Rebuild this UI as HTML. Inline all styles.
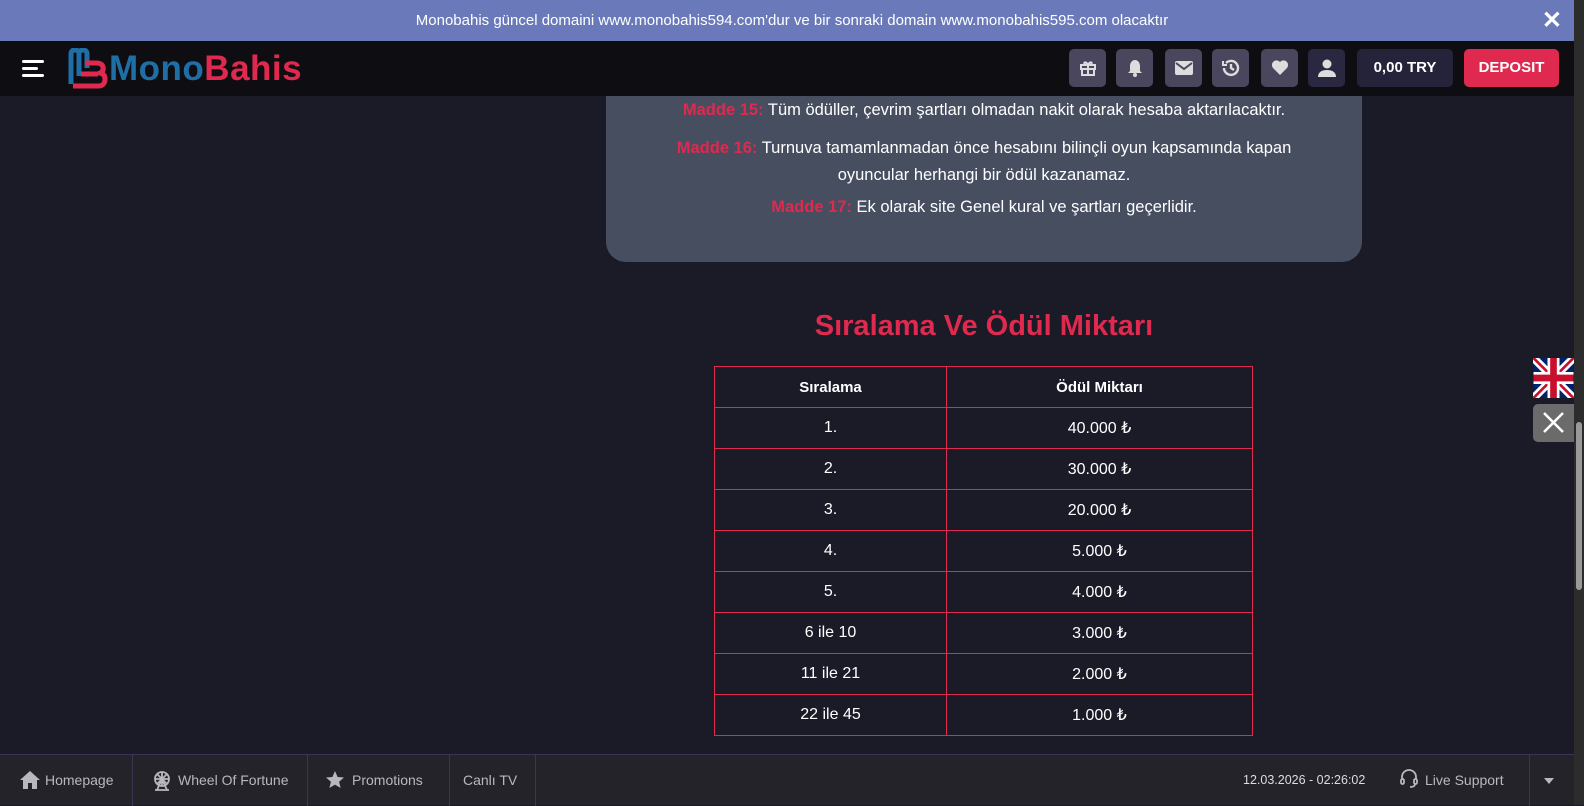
<!DOCTYPE html>
<html><head><meta charset="utf-8"><style>
*{box-sizing:border-box;margin:0;padding:0}
body{width:1584px;height:805px;overflow:hidden;background:#1b1a27;font-family:"Liberation Sans",sans-serif;position:relative;color:#fff}
.banner{position:absolute;left:0;top:0;width:1584px;height:41px;background:#6a79ba;text-align:center;line-height:41px;font-size:15px;color:#fff;z-index:3}
.banner .x{position:absolute;right:22px;top:0;font-size:24px;font-weight:bold}
.hdr{position:absolute;left:0;top:41px;width:1574px;height:55px;background:#0e0e12;z-index:3}
.ib{position:absolute;top:8px;width:37px;height:38px;background:#4a465e;border-radius:5px;display:flex;align-items:center;justify-content:center}
.bal{position:absolute;left:1357px;top:8px;width:96px;height:38px;background:#25233a;border-radius:5px;font-weight:bold;font-size:15px;line-height:38px;text-align:center}
.dep{position:absolute;left:1464px;top:8px;width:95px;height:38px;background:#e0294f;border-radius:5px;font-weight:bold;font-size:15px;line-height:38px;text-align:center}
.sb{position:absolute;left:1574px;top:0;width:10px;height:805px;background:#2c2c2c;z-index:4}
.sb div{position:absolute;left:2px;top:422px;width:6px;height:168px;background:#9a9a9a;border-radius:3px}
.card{position:absolute;left:606px;top:96px;width:756px;height:166px;background:#464e60;border-radius:0 0 20px 20px;text-align:center;font-size:16.5px}
.card p{position:absolute;left:0;width:100%}
.r{color:#e0294f;font-weight:bold}
h2{position:absolute;left:606px;width:756px;top:310px;text-align:center;color:#e0294f;font-size:29px;font-weight:bold}
table{position:absolute;left:714px;top:366px;width:539px;border-collapse:collapse;font-size:16px}
td,th{border:1px solid #e0294f;height:41px;text-align:center;padding:0}
td:first-child,th:first-child{width:232px}
th{font-weight:bold;font-size:15px}
.flag{position:absolute;left:1533px;top:358px;width:41px;height:40px}
.cl{position:absolute;left:1533px;top:404px;width:41px;height:38px;background:#6b6b6b;border-radius:5px 0 0 5px}
.bot{position:absolute;left:0;top:754px;width:1574px;height:51px;background:#24232a;border-top:1px solid #3a3550;font-size:14px;color:#b8b8c0}
.bot .d{position:absolute;top:0;width:1px;height:51px;background:#3a3550}
.bot span{position:absolute;top:17px}
</style></head><body>
<div class="banner">Monobahis güncel domaini www.monobahis594.com'dur ve bir sonraki domain www.monobahis595.com olacaktır<span class="x">✕</span></div>
<div class="hdr">
<svg style="position:absolute;left:22px;top:17px" width="24" height="20"><rect x="0" y="2" width="22" height="3" rx="1.5" fill="#fff"/><rect x="0" y="9" width="16" height="3" rx="1.5" fill="#fff"/><rect x="0" y="16" width="22" height="3" rx="1.5" fill="#fff"/></svg>
<svg style="position:absolute;left:68px;top:7px" width="40" height="41" viewBox="0 0 40 41"><path d="M3 36 V6 Q3 2 7 2 Q11 2 11 6 V28 M11 6 Q11 2 15 2 Q19 2 19 6 V20" fill="none" stroke="#1f6ea6" stroke-width="5"/><path d="M5 38 H30 Q37 38 37 31 Q37 26 32 25 Q36 23 35 19 Q34 15 28 15 H17 M13 26 H30" fill="none" stroke="#e0294f" stroke-width="5"/></svg>
<div style="position:absolute;left:109px;top:8px;font-size:35px;font-weight:bold;letter-spacing:0.5px"><span style="color:#1f6ea6">Mono</span><span style="color:#e0294f">Bahis</span></div>
<div class="ib" style="left:1069px"><svg width="18" height="18" viewBox="0 0 18 18" fill="none" stroke="#ddd" stroke-width="2"><rect x="2" y="6" width="14" height="4"/><rect x="3" y="10" width="12" height="6"/><path d="M9 6v10M9 6C7 2 4 3 6 6M9 6c2-4 5-3 3 0"/></svg></div>
<div class="ib" style="left:1116px"><svg width="16" height="18" viewBox="0 0 16 18"><path d="M8 1c-3 0-5 3-5 6v5l-2 2h14l-2-2V7c0-3-2-6-5-6z" fill="#ddd"/><circle cx="8" cy="16" r="2" fill="#ddd"/></svg></div>
<div class="ib" style="left:1165px"><svg width="18" height="14" viewBox="0 0 18 14"><rect width="18" height="14" rx="2" fill="#ddd"/><path d="M1 2l8 6 8-6" fill="none" stroke="#4a465e" stroke-width="2"/></svg></div>
<div class="ib" style="left:1212px"><svg width="20" height="20" viewBox="0 0 20 20" fill="none" stroke="#ddd" stroke-width="2.4"><path d="M3 10a7 7 0 1 0 2-5"/><path d="M10 6v4l3 2"/><path d="M2 3v4h4" stroke-width="2"/></svg></div>
<div class="ib" style="left:1261px"><svg width="18" height="16" viewBox="0 0 18 16"><path d="M9 15L2 8a4 4 0 0 1 7-6 4 4 0 0 1 7 6z" fill="#ddd"/></svg></div>
<div class="ib" style="left:1308px;background:#2a2740"><svg width="18" height="18" viewBox="0 0 18 18"><circle cx="9" cy="5" r="4.5" fill="#ddd"/><path d="M0 18c0-5 4-7 9-7s9 2 9 7z" fill="#ddd"/></svg></div>
<div class="bal">0,00 TRY</div>
<div class="dep">DEPOSIT</div>
</div>
<div class="card">
<p style="top:5px"><span class="r">Madde 15:</span> Tüm ödüller, çevrim şartları olmadan nakit olarak hesaba aktarılacaktır.</p>
<p style="top:39px;line-height:27px"><span class="r">Madde 16:</span> Turnuva tamamlanmadan önce hesabını bilinçli oyun kapsamında kapan<br>oyuncular herhangi bir ödül kazanamaz.</p>
<p style="top:102px"><span class="r">Madde 17:</span> Ek olarak site Genel kural ve şartları geçerlidir.</p>
</div>
<h2>Sıralama Ve Ödül Miktarı</h2>
<table>
<tr><th>Sıralama</th><th>Ödül Miktarı</th></tr>
<tr><td>1.</td><td>40.000 ₺</td></tr>
<tr><td>2.</td><td>30.000 ₺</td></tr>
<tr><td>3.</td><td>20.000 ₺</td></tr>
<tr><td>4.</td><td>5.000 ₺</td></tr>
<tr><td>5.</td><td>4.000 ₺</td></tr>
<tr><td>6 ile 10</td><td>3.000 ₺</td></tr>
<tr><td>11 ile 21</td><td>2.000 ₺</td></tr>
<tr><td>22 ile 45</td><td>1.000 ₺</td></tr>
</table>
<svg class="flag" viewBox="0 0 60 60"><rect width="60" height="60" fill="#012169"/><path d="M0 0L60 60M60 0L0 60" stroke="#fff" stroke-width="12"/><path d="M0 0L60 60M60 0L0 60" stroke="#c8102e" stroke-width="4"/><path d="M30 0V60M0 30H60" stroke="#fff" stroke-width="18"/><path d="M30 0V60M0 30H60" stroke="#c8102e" stroke-width="10"/></svg>
<div class="cl"><svg width="41" height="38"><path d="M11 9L30 28M30 9L11 28" stroke="#fff" stroke-width="2.5"/></svg></div>
<div class="bot">
<svg style="position:absolute;left:20px;top:15px" width="20" height="20" viewBox="0 0 20 20"><path d="M10 1L0 10h3v9h5v-6h4v6h5v-9h3z" fill="#b8b8c0"/></svg><span style="left:45px">Homepage</span>
<div class="d" style="left:132px"></div>
<svg style="position:absolute;left:152px;top:15px" width="20" height="21" viewBox="0 0 20 21" fill="none" stroke="#b8b8c0" stroke-width="1.8"><circle cx="10" cy="9" r="7"/><path d="M10 2v14M3 9h14M5 4l10 10M15 4L5 14M5 20l5-11 5 11M3 20h14"/></svg><span style="left:178px">Wheel Of Fortune</span>
<div class="d" style="left:307px"></div>
<svg style="position:absolute;left:326px;top:16px" width="18" height="18" viewBox="0 0 18 18"><path d="M9 0l2.6 6 6.4.5-4.9 4.2 1.5 6.3L9 13.6 3.4 17l1.5-6.3L0 6.5 6.4 6z" fill="#b8b8c0"/></svg><span style="left:352px">Promotions</span>
<div class="d" style="left:449px"></div>
<span style="left:463px">Canlı TV</span>
<div class="d" style="left:535px"></div>
<span style="left:1243px;font-size:12.5px;color:#ddd;top:18px">12.03.2026 - 02:26:02</span>
<svg style="position:absolute;left:1400px;top:14px" width="18" height="20" viewBox="0 0 18 20" fill="none" stroke="#b8b8c0" stroke-width="1.8"><path d="M2 11V8a7 7 0 0 1 14 0v3"/><rect x="1" y="10" width="3" height="5" rx="1.5"/><rect x="14" y="10" width="3" height="5" rx="1.5"/><path d="M15 15q0 3-5 3"/></svg><span style="left:1425px">Live Support</span>
<div class="d" style="left:1529px"></div>
<svg style="position:absolute;left:1544px;top:23px" width="10" height="6"><path d="M0 0h10L5 6z" fill="#b8b8c0"/></svg>
</div>
<div class="sb"><div></div></div>
</body></html>
